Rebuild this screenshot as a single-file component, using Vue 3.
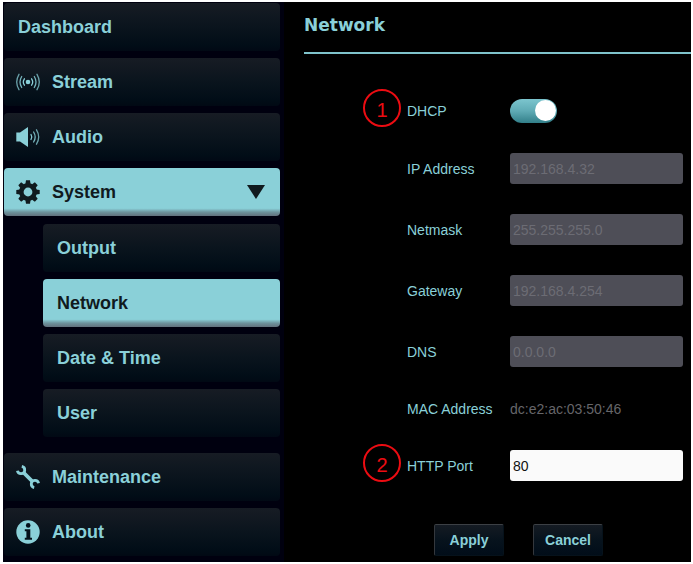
<script setup>
import { reactive, ref } from 'vue'

const submenu = ['Output', 'Network', 'Date & Time', 'User']
const current = ref('Network')
const dhcp = ref(true)
const port = ref('80')
const addresses = reactive([
  { id: 'ip', label: 'IP Address', value: '192.168.4.32' },
  { id: 'netmask', label: 'Netmask', value: '255.255.255.0' },
  { id: 'gateway', label: 'Gateway', value: '192.168.4.254' },
  { id: 'dns', label: 'DNS', value: '0.0.0.0' }
])
const teeth = [0, 45, 90, 135, 180, 225, 270, 315]
</script>

<template>
  <div class="shell">
    <nav class="sidebar">
      <a class="item plain" href="#dashboard">Dashboard</a>
      <a class="item" href="#stream">
        <svg class="icon" viewBox="0 0 24 24" fill="none" stroke="currentColor" stroke-width="1.3" stroke-linecap="round">
          <circle cx="12" cy="12" r="2.3" fill="currentColor" stroke="none" />
          <path d="M8.4 8.8q-2.2 3.2 0 6.4M15.6 8.8q2.2 3.2 0 6.4" />
          <path opacity="0.85" d="M5.7 6.5q-3.4 5.5 0 11M18.3 6.5q3.4 5.5 0 11" />
          <path opacity="0.75" d="M3 4.3q-4.6 7.7 0 15.4M21 4.3q4.6 7.7 0 15.4" />
        </svg>
        Stream
      </a>
      <a class="item" href="#audio">
        <svg class="icon" viewBox="0 0 24 24" fill="none" stroke="currentColor" stroke-width="1.3" stroke-linecap="round">
          <path d="M0.3 7.5H4L12 2V22L4 16.5H0.3Z" fill="currentColor" stroke="none" />
          <path d="M15 9.5q1.6 2.5 0 5" />
          <path opacity="0.85" d="M17.6 7q3.2 5 0 10" />
          <path opacity="0.75" d="M20.5 4.8q4.4 7.2 0 14.4" />
        </svg>
        Audio
      </a>
      <a class="item active" href="#system">
        <svg class="icon" viewBox="0 0 24 24" fill="currentColor">
          <circle cx="12" cy="12" r="6.7" fill="none" stroke="currentColor" stroke-width="4.6" />
          <path v-for="angle in teeth" :key="angle" d="M9.4 4L10 0.3H14L14.6 4Z" :transform="`rotate(${angle} 12 12)`" />
        </svg>
        System
        <svg class="caret" viewBox="0 0 18 14" fill="currentColor"><path d="M0 0H18L9 14Z" /></svg>
      </a>
      <div class="submenu">
        <a
          v-for="name in submenu"
          :key="name"
          class="item plain"
          :class="{ active: current === name }"
          href="#system"
          @click="current = name"
        >{{ name }}</a>
      </div>
      <a class="item" href="#maintenance">
        <svg class="icon" viewBox="0 0 24 24" fill="none" stroke="currentColor">
          <path d="M7.5 7.5L16.500 16.500" stroke-width="3.8" />
          <path d="M5.800 1.400A3.700 3.700 0 1 1 1.400 5.800M18.200 22.600A3.700 3.700 0 1 1 22.600 18.200" stroke-width="2.8" />
        </svg>
        Maintenance
      </a>
      <a class="item" href="#about">
        <svg class="icon" viewBox="0 0 24 24">
          <circle cx="12" cy="12" r="11.7" fill="currentColor" />
          <g fill="#04101a">
            <circle cx="12.2" cy="5.4" r="2.3" />
            <path d="M8.8 9.2H14.3V17.8H16V19.8H8.8V17.8H10.4V11.2H8.8Z" />
          </g>
        </svg>
        About
      </a>
    </nav>

    <main class="content">
      <h1 class="title">Network</h1>
      <form class="form" @submit.prevent>
        <div class="row switch-row">
          <span class="marker">1</span>
          <label for="dhcp">DHCP</label>
          <input id="dhcp" v-model="dhcp" class="switch" type="checkbox" role="switch" />
        </div>
        <div v-for="field in addresses" :key="field.id" class="row">
          <label :for="field.id">{{ field.label }}</label>
          <input :id="field.id" v-model="field.value" class="text" type="text" :disabled="dhcp" />
        </div>
        <div class="row mac-row">
          <span>MAC Address</span>
          <span class="mac">dc:e2:ac:03:50:46</span>
        </div>
        <div class="row">
          <span class="marker">2</span>
          <label for="port">HTTP Port</label>
          <input id="port" v-model="port" class="text" type="text" />
        </div>
        <div class="actions">
          <button class="button" type="submit">Apply</button>
          <button class="button" type="button">Cancel</button>
        </div>
      </form>
    </main>
  </div>
</template>

<style>
body {
  background: #fff;
}
</style>

<style scoped>
.shell {
  display: flex;
  box-sizing: border-box;
  min-height: calc(100vh - 4px);
  margin: 2px 2px 2px 3px;
  background: #000;
  color: #8ad0d8;
  font-family: "Liberation Sans", Arial, sans-serif;
}
.sidebar {
  display: flex;
  flex-direction: column;
  flex: 0 0 281px;
  box-sizing: border-box;
  gap: 7px;
  padding: 1px 4px 5px 1px;
  background: #00000f;
}
.item {
  display: flex;
  align-items: center;
  gap: 12px;
  box-sizing: border-box;
  height: 48px;
  padding: 0 15px 0 12px;
  border-radius: 4px;
  background: linear-gradient(#171c24, #0a141d 50%, #010d17 88%, #010914);
  color: #8ad0d8;
  font-size: 18px;
  font-weight: bold;
  text-decoration: none;
}
.item.plain {
  padding-left: 14px;
}
.item.active {
  background: linear-gradient(#8ad0d8 84%, #6d929c 92%, #62717d);
  color: #101a1e;
}
.icon {
  flex: none;
  width: 24px;
  height: 24px;
}
.caret {
  width: 18px;
  height: 14px;
  margin-left: auto;
}
.submenu {
  display: flex;
  flex-direction: column;
  gap: 7px;
  margin: 1px 0 9px 39px;
}
.content {
  flex: 1;
  min-width: 0;
  padding-left: 20px;
}
.title {
  margin: 0;
  padding: 12px 0 16px;
  border-bottom: 2px solid #7fc3cb;
  font: bold 17px/22px "DejaVu Sans", Verdana, sans-serif;
}
.form {
  display: flex;
  flex-direction: column;
  gap: 30px;
  padding: 45px 8px 0 103px;
  font-size: 14px;
}
.row {
  position: relative;
  display: grid;
  grid-template-columns: 103px minmax(0, 1fr);
  align-items: center;
  min-height: 31px;
}
.switch-row {
  min-height: 24px;
}
.mac-row {
  min-height: 23px;
}
.mac {
  color: #66666a;
}
.text {
  box-sizing: border-box;
  width: 100%;
  height: 31px;
  margin: 0;
  padding: 0 3px;
  border: 0;
  border-radius: 3px;
  background: #fafafa;
  color: #111;
  font: inherit;
}
.text:disabled {
  background: #4e4e57;
  color: #6c6c74;
}
.switch {
  appearance: none;
  width: 47px;
  height: 24px;
  margin: 0;
  padding: 1px;
  border-radius: 12px;
  background: #4e4e57;
}
.switch::before {
  content: "";
  display: block;
  width: 21px;
  height: 21px;
  border-radius: 50%;
  background: #fff;
}
.switch:checked {
  background: linear-gradient(#7cc5ce, #5fabb5 50%, #327f89);
}
.switch:checked::before {
  margin-left: auto;
}
.marker {
  position: absolute;
  top: 50%;
  left: -44px;
  box-sizing: border-box;
  width: 38px;
  height: 38px;
  margin-top: -22px;
  padding-top: 2px;
  border: 2px solid #ec0c12;
  border-radius: 50%;
  color: #ec0c12;
  font-size: 20px;
  line-height: 34px;
  text-align: center;
}
.actions {
  display: flex;
  gap: 29px;
  padding: 13px 0 0 27px;
}
.button {
  width: 70px;
  height: 32px;
  padding: 0;
  border: 1px solid #06121b;
  border-top-color: #3c4045;
  border-left-color: #34383d;
  border-radius: 2px;
  background: linear-gradient(#151b23, #07131d 50%, #010d19);
  color: #8ad0d8;
  font: bold 14px "Liberation Sans", Arial, sans-serif;
}
</style>
